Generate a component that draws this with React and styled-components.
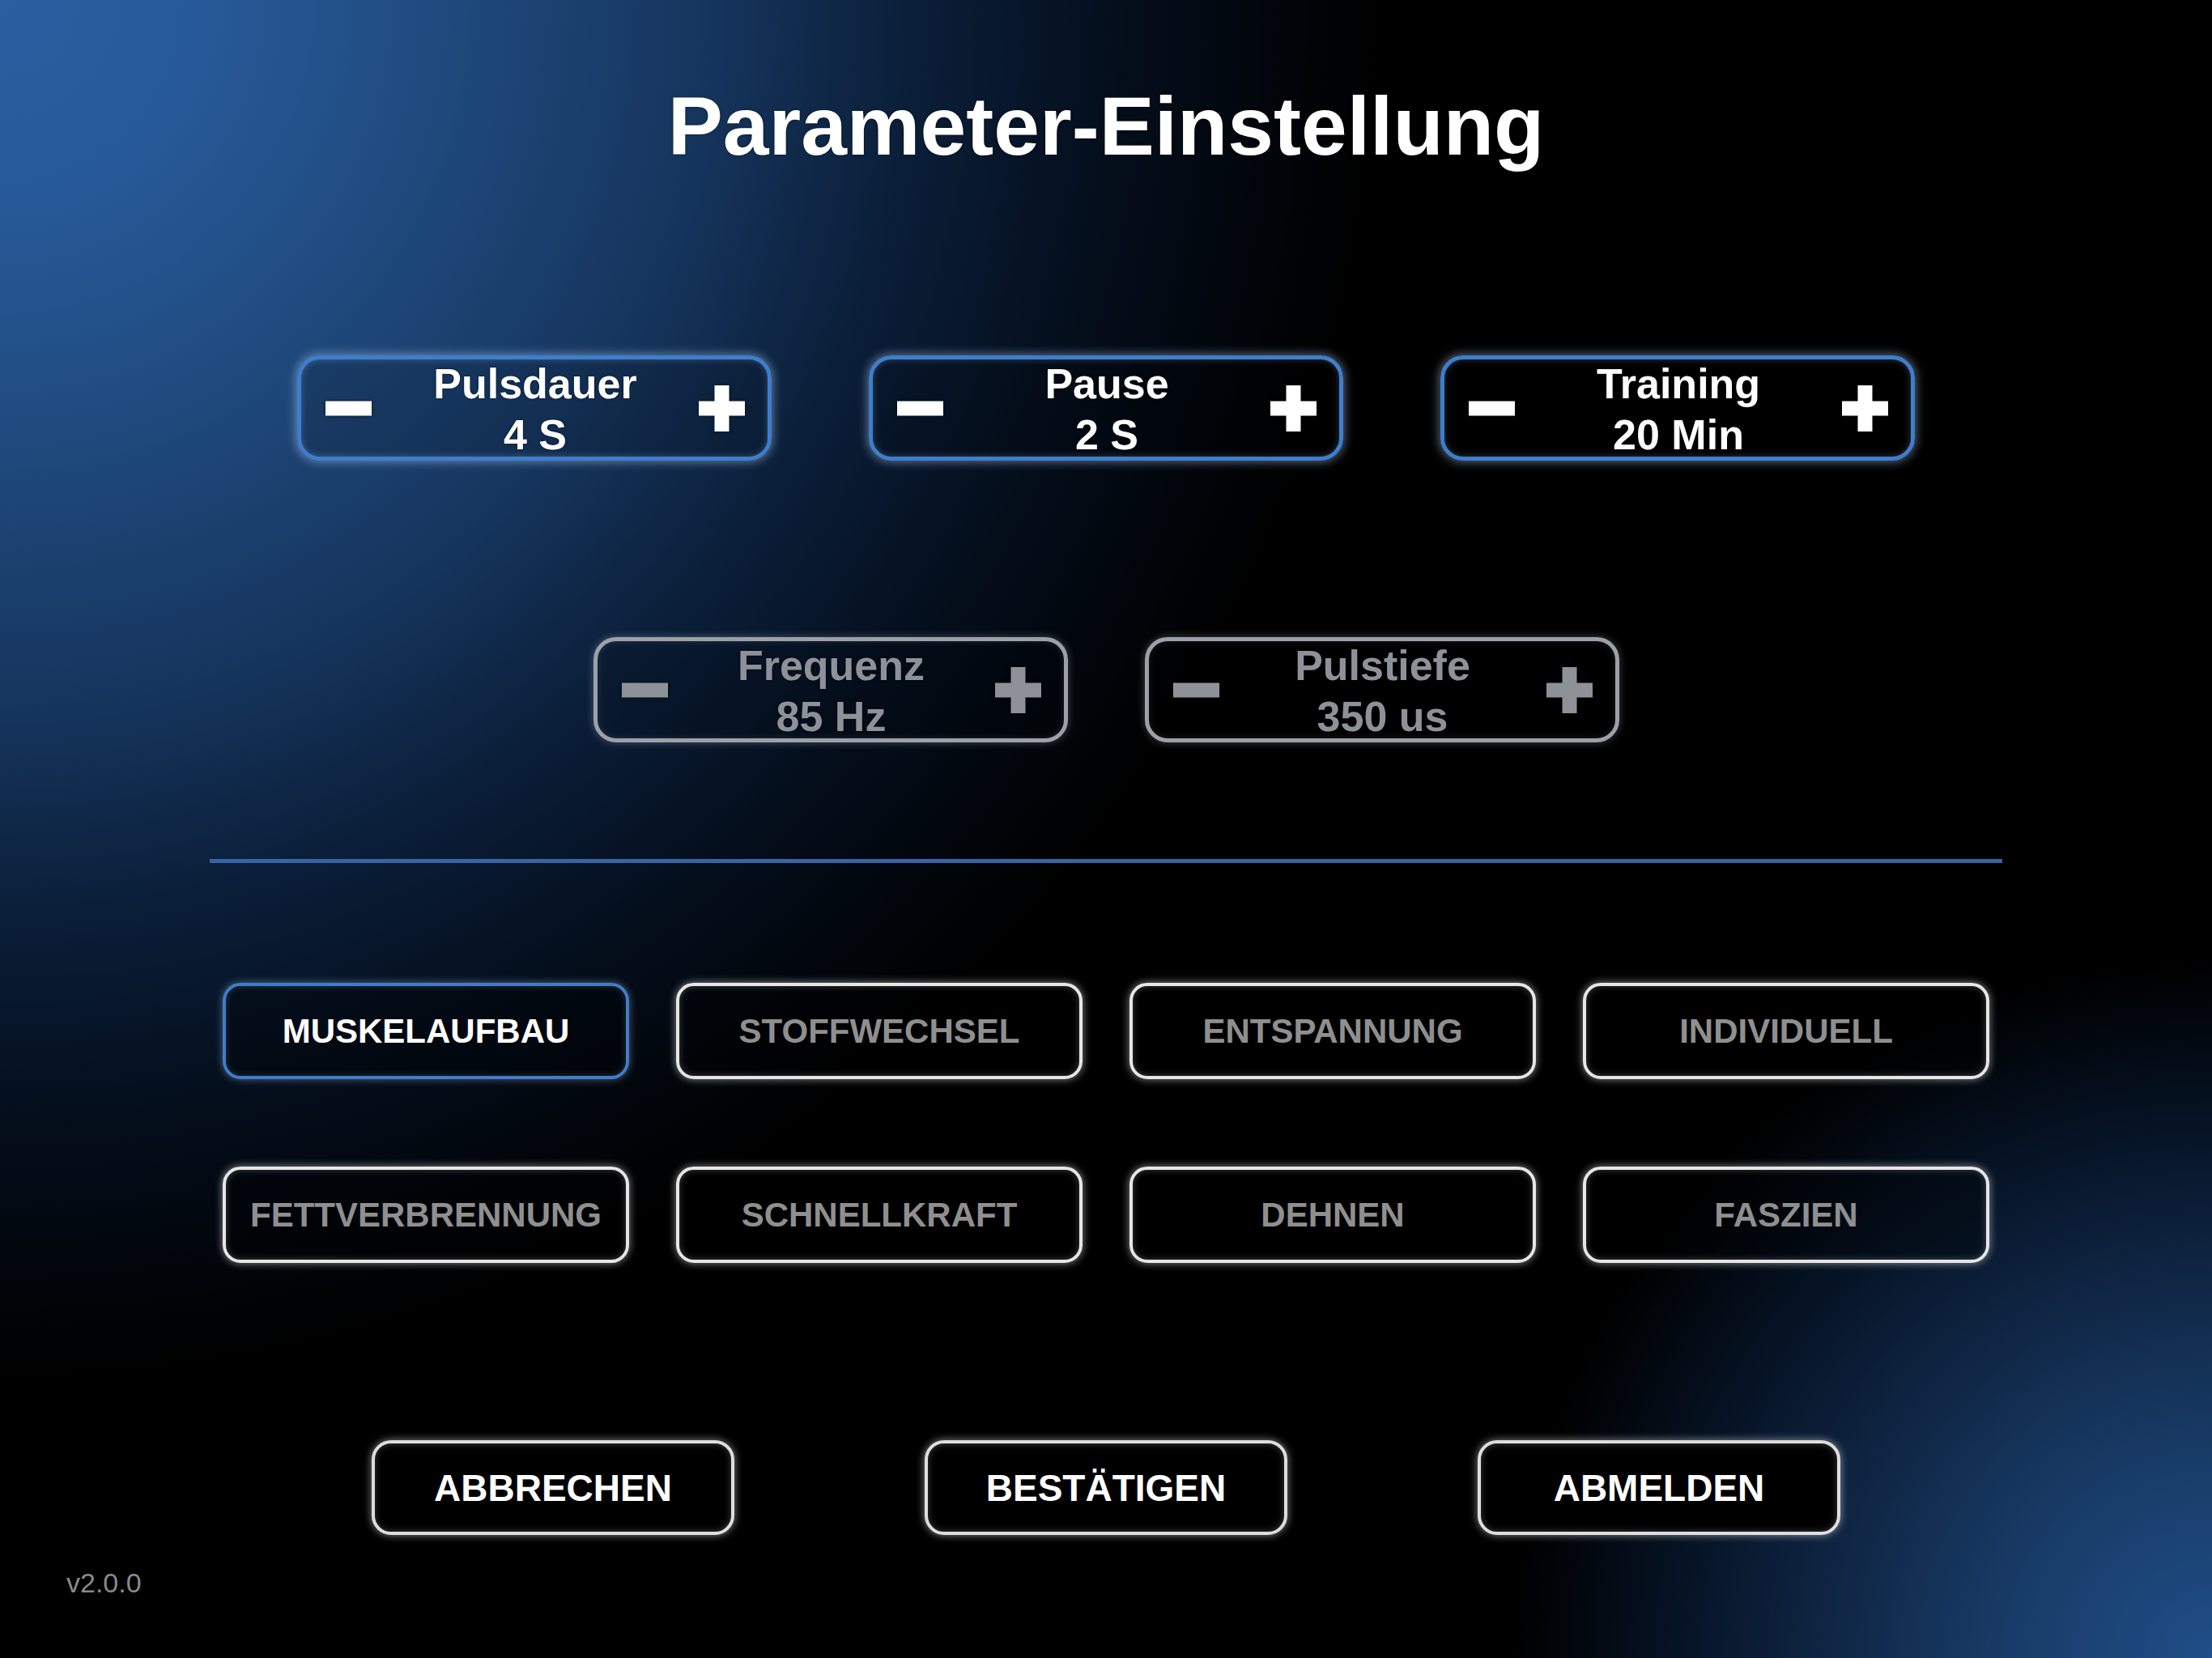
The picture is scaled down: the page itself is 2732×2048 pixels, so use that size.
import React from 'react';
import styled, { createGlobalStyle } from 'styled-components';

const Global = createGlobalStyle`
  html, body { margin: 0; padding: 0; background: #000; }
  body {
    font-family: "Liberation Sans", Arial, Helvetica, sans-serif;
    -webkit-font-smoothing: antialiased;
  }
  #root { width: 100%; }
`;

const Page = styled.div`
  position: relative;
  width: 100%;
  height: 2048px;
  overflow: hidden;
  box-sizing: border-box;
  display: flex;
  flex-direction: column;
  align-items: center;
  padding-top: 105px;
  background:
    radial-gradient(circle at 100% 100%, #204e88 0px, #183b66 260px, #0f2543 480px, #061325 660px, rgba(0,0,0,0) 860px),
    radial-gradient(circle at 0% 0%, #2a5fa2 0px, #265896 280px, #1f497c 560px, #16365f 860px, #0b1f3a 1120px, #040e1c 1380px, #000 1700px),
    #000;
`;

const Title = styled.h1`
  margin: 0;
  font-size: 102px;
  line-height: 103px;
  font-weight: 700;
  color: #fff;
  text-shadow: 0 0 3px rgba(0, 0, 0, 0.6);
`;

const StepperRow = styled.div`
  display: flex;
  gap: ${(p) => p.$gap}px;
  margin-top: ${(p) => p.$top}px;
`;

const Stepper = styled.div`
  box-sizing: border-box;
  width: 586px;
  height: 130px;
  border-radius: 28px;
  border: 5px solid ${(p) => (p.$disabled ? '#9ca0a8' : '#3d7ecd')};
  background: rgba(0, 0, 0, 0.14);
  box-shadow: ${(p) =>
    p.$disabled
      ? '0 0 10px 1px rgba(255,255,255,0.22), inset 0 0 8px rgba(255,255,255,0.12)'
      : '0 0 12px 2px rgba(190,215,255,0.45), inset 0 0 8px rgba(190,215,255,0.25)'};
  color: ${(p) => (p.$disabled ? '#8e9198' : '#ffffff')};
  display: flex;
  align-items: center;
  padding: 0 28px 0 30px;
`;

const StepIcon = styled.svg`
  width: 57px;
  height: 57px;
  flex: none;
  fill: currentColor;
  filter: drop-shadow(0 0 2px rgba(0, 0, 0, 0.6));
`;

const StepLabel = styled.div`
  flex: 1;
  text-align: center;
  font-size: 52px;
  line-height: 63px;
  font-weight: 700;
  padding-top: 4px;
  text-shadow: 0 0 3px rgba(0, 0, 0, 0.6);
`;

const Divider = styled.div`
  width: 2214px;
  height: 5px;
  margin-top: 144px;
  background: #3664a6;
`;

const PresetGrid = styled.div`
  margin-top: 148px;
  display: grid;
  grid-template-columns: repeat(4, 502px);
  grid-auto-rows: 119px;
  column-gap: 58px;
  row-gap: 108px;
`;

const Preset = styled.button`
  box-sizing: border-box;
  width: 100%;
  height: 100%;
  margin: 0;
  padding: 0;
  border-radius: 22px;
  border: 4px solid ${(p) => (p.$active ? '#3f7dca' : '#e6e6e6')};
  background: rgba(0, 0, 0, 0.35);
  color: ${(p) => (p.$active ? '#ffffff' : '#8f8f8f')};
  font-family: "Liberation Sans", Arial, sans-serif;
  font-size: 42px;
  line-height: 1;
  font-weight: 700;
  box-shadow: ${(p) =>
    p.$active
      ? '0 0 10px 1px rgba(190,215,255,0.35), inset 0 0 8px rgba(190,215,255,0.2)'
      : '0 0 10px 1px rgba(255,255,255,0.45), inset 0 0 8px rgba(255,255,255,0.25)'};
`;

const ActionRow = styled.div`
  margin-top: 219px;
  display: flex;
  gap: 235px;
`;

const Action = styled.button`
  box-sizing: border-box;
  width: 448px;
  height: 117px;
  margin: 0;
  padding: 0;
  border-radius: 24px;
  border: 4px solid #dedede;
  background: #000;
  color: #fff;
  font-family: "Liberation Sans", Arial, sans-serif;
  font-size: 46px;
  line-height: 1;
  font-weight: 700;
  box-shadow: 0 0 10px 1px rgba(255, 255, 255, 0.45), inset 0 0 8px rgba(255, 255, 255, 0.25);
`;

const Footer = styled.div`
  align-self: stretch;
  margin-top: 42px;
  padding-left: 82px;
  font-size: 34px;
  line-height: 34px;
  color: #8a8a8a;
`;

const Minus = () => (
  <StepIcon viewBox="0 0 57 57">
    <rect x="0" y="19.5" width="57" height="18" />
  </StepIcon>
);

const Plus = () => (
  <StepIcon viewBox="0 0 57 57">
    <rect x="0" y="19.5" width="57" height="18" />
    <rect x="19.5" y="0" width="18" height="57" />
  </StepIcon>
);

const StepperBox = ({ label, value, disabled }) => (
  <Stepper $disabled={disabled}>
    <Minus />
    <StepLabel>
      {label}
      <br />
      {value}
    </StepLabel>
    <Plus />
  </Stepper>
);

const presets = [
  'MUSKELAUFBAU',
  'STOFFWECHSEL',
  'ENTSPANNUNG',
  'INDIVIDUELL',
  'FETTVERBRENNUNG',
  'SCHNELLKRAFT',
  'DEHNEN',
  'FASZIEN',
];

export default function App() {
  return (
    <>
      <Global />
      <Page>
        <Title>Parameter-Einstellung</Title>
        <StepperRow $gap={120} $top={231}>
          <StepperBox label="Pulsdauer" value="4 S" />
          <StepperBox label="Pause" value="2 S" />
          <StepperBox label="Training" value="20 Min" />
        </StepperRow>
        <StepperRow $gap={95} $top={218}>
          <StepperBox label="Frequenz" value="85 Hz" disabled />
          <StepperBox label="Pulstiefe" value="350 us" disabled />
        </StepperRow>
        <Divider />
        <PresetGrid>
          {presets.map((p, i) => (
            <Preset key={p} $active={i === 0}>
              {p}
            </Preset>
          ))}
        </PresetGrid>
        <ActionRow>
          <Action>ABBRECHEN</Action>
          <Action>BESTÄTIGEN</Action>
          <Action>ABMELDEN</Action>
        </ActionRow>
        <Footer>v2.0.0</Footer>
      </Page>
    </>
  );
}
